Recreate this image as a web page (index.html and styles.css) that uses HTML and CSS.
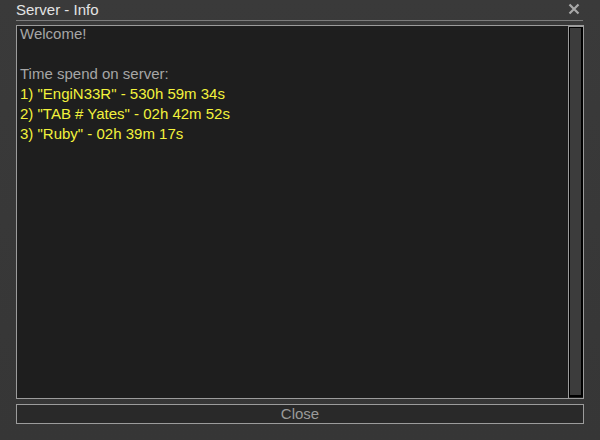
FILE: index.html
```html
<!DOCTYPE html>
<html>
<head>
<meta charset="utf-8">
<link rel="stylesheet" href="styles.css">
</head>
<body>
<div class="window">
  <div class="titlebar">
    <span class="title">Server - Info</span>
    <svg class="close-x" width="12" height="12" viewBox="0 0 12 12"><path d="M1.5 1.5 L10.5 10.5 M10.5 1.5 L1.5 10.5" stroke="#a8a8a8" stroke-width="2.2"/></svg>
  </div>
  <div class="divider"></div>
  <div class="textbox">
    <div class="content">
      <div class="line gray">Welcome!</div>
      <div class="line">&nbsp;</div>
      <div class="line gray">Time spend on server:</div>
      <div class="line yellow">1) "EngiN33R" - 530h 59m 34s</div>
      <div class="line yellow">2) "TAB # Yates" - 02h 42m 52s</div>
      <div class="line yellow">3) "Ruby" - 02h 39m 17s</div>
    </div>
    <div class="scrollbar"><div class="thumb"></div></div>
  </div>
  <div class="button">Close</div>
</div>
</body>
</html>
```
FILE: styles.css
```css
html, body {
  margin: 0;
  padding: 0;
  width: 600px;
  height: 440px;
  overflow: hidden;
}
body {
  background: #383838;
  font-family: "Liberation Sans", Arial, sans-serif;
}
.window {
  display: flex;
  flex-direction: column;
  padding: 0 16px;
  height: 440px;
  box-sizing: border-box;
  background: linear-gradient(#3a3a3a, #363636);
}
.titlebar {
  height: 20px;
  display: flex;
  align-items: center;
  justify-content: space-between;
}
.title {
  color: #e4e4e4;
  font-size: 15px;
  line-height: 20px;
  margin-top: -1px;
}
.close-x {
  margin-right: 4px;
  margin-top: -2px;
}
.divider {
  height: 1px;
  background: #7c7c7c;
  margin-right: 1px;
}
.textbox {
  margin-top: 4px;
  height: 374px;
  box-sizing: border-box;
  border: 1px solid #9c9c9c;
  background: #1e1e1e;
  display: flex;
}
.content {
  flex: 1;
  padding-left: 3px;
  margin-top: -2px;
  font-size: 15px;
  line-height: 20px;
}
.gray { color: #a6a6a6; }
.yellow { color: #f2f23c; }
.scrollbar {
  width: 15px;
  box-sizing: border-box;
  border-left: 1px solid #9c9c9c;
  border-top: 1px solid #9c9c9c;
  margin-top: 0;
  display: flex;
  padding-bottom: 1px;
}
.thumb {
  flex: 1;
  border: 1px solid #000;
  border-right-width: 2px;
  border-bottom-width: 2px;
  background: #3c3c3c;
}
.button {
  margin-top: 5px;
  height: 20px;
  box-sizing: border-box;
  border: 1px solid #9c9c9c;
  background: #292929;
  color: #9a9a9a;
  font-size: 15px;
  line-height: 18px;
  text-align: center;
}
```
